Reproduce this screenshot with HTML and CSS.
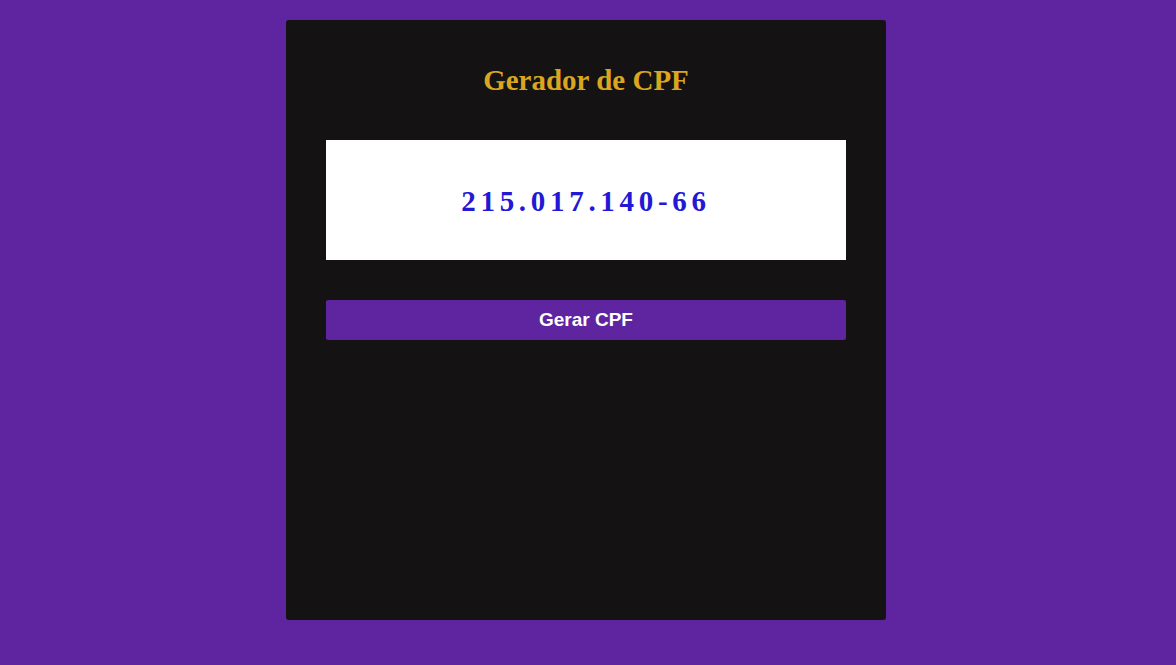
FILE: index.html
```html
<!DOCTYPE html>
<html lang="pt-BR">
<head>
<meta charset="utf-8">
<title>Gerador de CPF</title>
<link rel="stylesheet" href="styles.css">
</head>
<body>
<main class="card">
  <h1 class="title">Gerador de CPF</h1>
  <div class="result"><span class="cpf">215.017.140-66</span></div>
  <button class="btn" type="button">Gerar CPF</button>
</main>
</body>
</html>
```
FILE: styles.css
```css
html, body {
  margin: 0;
  height: 100%;
}
body {
  background: #5f24a0;
  padding: 20px 4px 0 0;
  box-sizing: border-box;
  display: flex;
  justify-content: center;
  align-items: flex-start;
  font-family: "Liberation Serif", "Times New Roman", serif;
}
.card {
  width: 600px;
  height: 600px;
  box-sizing: border-box;
  background: #141213;
  border-radius: 3px;
  padding: 40px;
  display: flex;
  flex-direction: column;
}
.title {
  margin: 0;
  height: 40px;
  line-height: 40px;
  text-align: center;
  color: #daa520;
  font-size: 29px;
  font-weight: bold;
}
.result {
  margin-top: 40px;
  height: 120px;
  background: #ffffff;
  display: flex;
  align-items: center;
  justify-content: center;
}
.cpf {
  color: #2318d4;
  font-size: 29px;
  font-weight: bold;
  letter-spacing: 4.7px;
  padding-top: 2px;
}
.btn {
  margin-top: 40px;
  height: 40px;
  border: none;
  border-radius: 2px;
  background: #5f24a0;
  color: #ffffff;
  font-family: "Liberation Sans", Arial, sans-serif;
  font-size: 19px;
  font-weight: bold;
  cursor: pointer;
}
```
